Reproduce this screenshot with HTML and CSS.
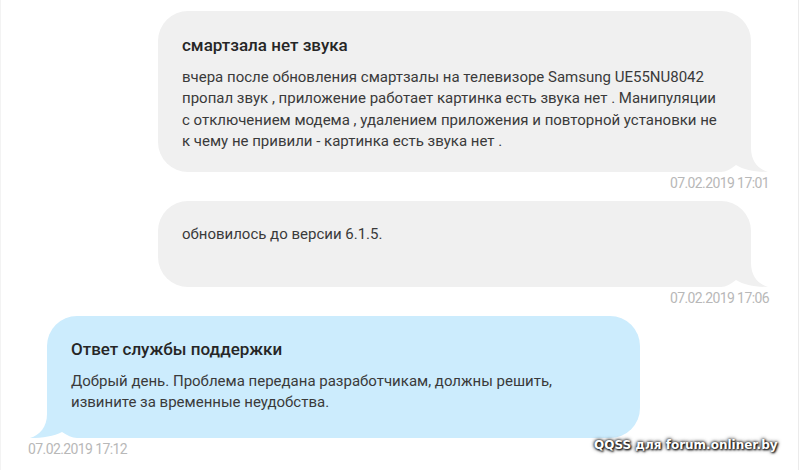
FILE: index.html
```
<!DOCTYPE html>
<html lang="ru">
<head>
<meta charset="utf-8">
<title>Переписка</title>
<link rel="stylesheet" href="styles.css">
</head>
<body>
<div class="page">
  <div class="thread">
    <div class="msg msg-out">
      <div class="bubble bubble-gray">
        <div class="title">смартзала нет звука</div>
        <p class="text">вчера после обновления смартзалы на телевизоре Samsung UE55NU8042 пропал звук , приложение работает картинка есть звука нет . Манипуляции с отключением модема , удалением приложения и повторной установки не к чему не привили - картинка есть звука нет .</p>
        <svg class="tail tail-right" width="48" height="44" viewBox="0 0 48 44"><rect x="0" y="13" width="30" height="31" fill="#fff"/><path d="M0,44 C5,44 10,41 15,37 C23,42 34,44 47,44 C37,41 30,33 30,20 V0 H0 Z" fill="#f0f0f0"/></svg>
      </div>
      <div class="time">07.02.2019 17:01</div>
    </div>

    <div class="msg msg-out">
      <div class="bubble bubble-gray">
        <p class="text">обновилось до версии 6.1.5.<br>&nbsp;</p>
        <svg class="tail tail-right" width="48" height="44" viewBox="0 0 48 44"><rect x="0" y="13" width="30" height="31" fill="#fff"/><path d="M0,44 C5,44 10,41 15,37 C23,42 34,44 47,44 C37,41 30,33 30,20 V0 H0 Z" fill="#f0f0f0"/></svg>
      </div>
      <div class="time">07.02.2019 17:06</div>
    </div>

    <div class="msg msg-in">
      <div class="bubble bubble-blue">
        <div class="title">Ответ службы поддержки</div>
        <p class="text">Добрый день. Проблема передана разработчикам, должны решить, извините за временные неудобства.</p>
        <svg class="tail tail-left" width="48" height="44" viewBox="0 0 48 44"><rect x="0" y="13" width="30" height="31" fill="#fff"/><path d="M0,44 C5,44 10,41 15,38 C23,42 34,44 47,44 C37,41 30,33 30,20 V0 H0 Z" fill="#ccecfd"/></svg>
      </div>
      <div class="time">07.02.2019 17:12</div>
    </div>
  </div>
  <div class="watermark">QQSS для forum.onliner.by</div>
</div>
</body>
</html>
```

FILE: styles.css
```
html, body {
  margin: 0;
  padding: 0;
  background: #fff;
}

.page {
  position: relative;
  width: 797px;
  height: 470px;
  border-left: 1px solid #f3f3f3;
  border-right: 1px solid #ebebeb;
  font-family: Roboto, "Liberation Sans", Arial, sans-serif;
  color: #333;
  overflow: hidden;
}

.thread {
  display: flex;
  flex-direction: column;
  padding: 11px 29px 0 27px;
}

.msg {
  display: flex;
  flex-direction: column;
  margin-bottom: 10px;
}

.msg-out {
  align-items: flex-end;
}

.msg-in {
  align-items: flex-start;
}

.bubble {
  position: relative;
  width: 593px;
  box-sizing: border-box;
  padding: 23px 24px 20px;
  border-radius: 30px;
}

.msg-out .bubble {
  margin-right: 18px;
}

.msg-in .bubble {
  margin-left: 19px;
  padding-top: 22px;
  padding-bottom: 25px;
}

.bubble-gray {
  background: #f0f0f0;
}

.bubble-blue {
  background: #ccecfd;
}

.title,
.text {
  position: relative;
  z-index: 1;
}

.title {
  font-size: 17px;
  font-weight: 500;
  line-height: 22px;
  color: #262626;
  margin-bottom: 11px;
}

.text {
  margin: 0;
  font-size: 15px;
  line-height: 1.42;
  color: #3a3a3a;
}

.tail {
  position: absolute;
  bottom: 0;
  display: block;
  z-index: 0;
}

.tail-right {
  right: -18px;
}

.tail-left {
  left: -18px;
  transform: scaleX(-1);
}

.time {
  margin-top: 3px;
  font-size: 14px;
  line-height: 16px;
  font-weight: 400;
  letter-spacing: -0.6px;
  color: #b8b8b8;
}

.watermark {
  position: absolute;
  left: 593px;
  top: 438px;
  font-family: "DejaVu Sans", Verdana, sans-serif;
  font-weight: bold;
  font-size: 12px;
  color: #fff;
  text-shadow: 0 0 3px #000, 0 0 4px #333, 1px 1px 2px #000;
}
```
